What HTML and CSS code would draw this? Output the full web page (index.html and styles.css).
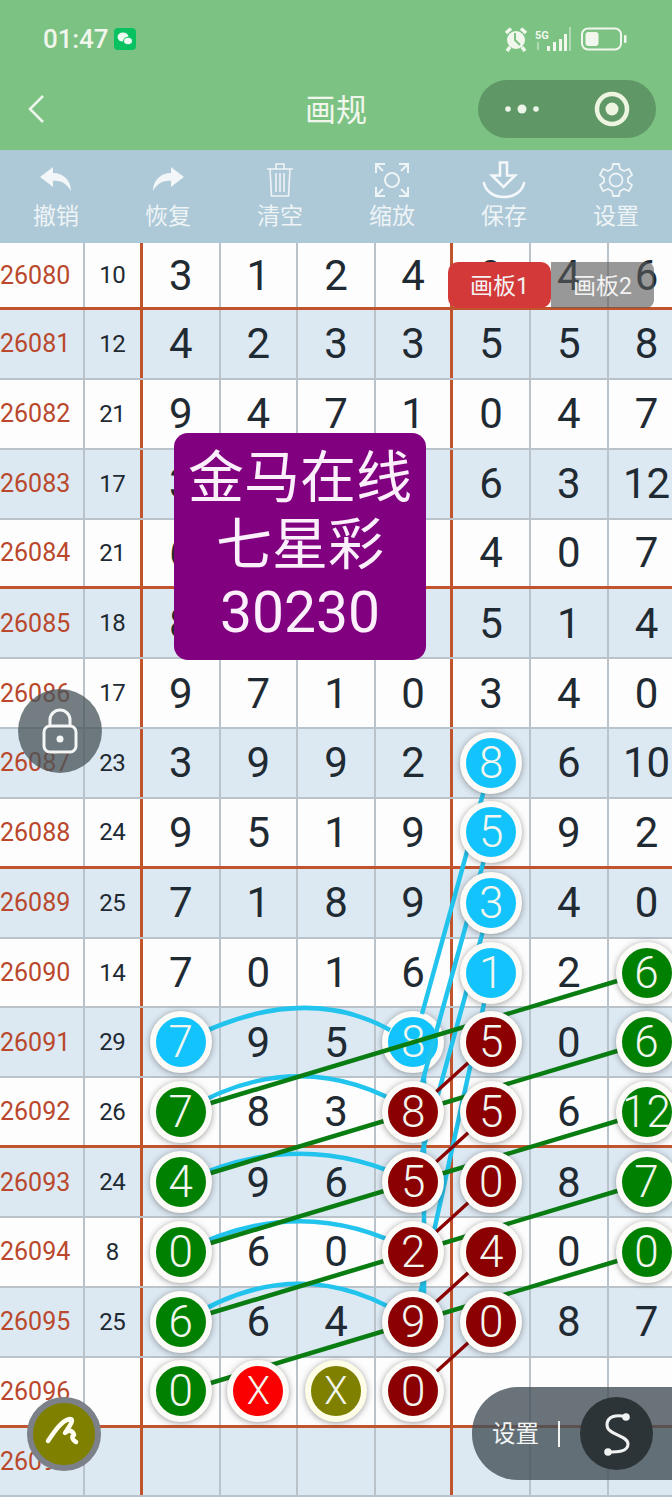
FILE: index.html
```html
<!DOCTYPE html>
<html lang="zh">
<head>
<meta charset="utf-8">
<title>画规</title>
<link rel="stylesheet" href="styles.css">
</head>
<body>
<div class="page">
  <header class="head">
    <div class="status">
      <div class="status-left">
        <span class="time">01:47</span>
        <svg class="wechat" width="22" height="22" viewBox="0 0 22 22"><rect width="22" height="22" rx="4" fill="#08c160"/><ellipse cx="9" cy="9" rx="5.500" ry="4.500" fill="#eefbf2"/><ellipse cx="14" cy="13" rx="4.500" ry="3.800" fill="#eefbf2" stroke="#08c160"/></svg>
      </div>
      <div class="status-right">
        <svg width="24" height="26" viewBox="0 0 24 26"><circle cx="12" cy="14" r="9" fill="#f2f7ee"/><path d="M11 7v7l5 5" fill="none" stroke="#7cc283" stroke-width="2"/><path d="M2 7l5-4.500M22 7l-5-4.500M6 21l-3 4M18 21l3 4" stroke="#f2f7ee" stroke-width="3.500"/></svg>
        <svg width="37" height="26" viewBox="0 0 37 26"><text x="1" y="13" class="fiveg">5G</text><path d="M3 16h2v8H3" fill="#f2f7ee" opacity=".45"/><path d="M13 20h3v5h-3zM19 16h3v9h-3zM25 13h3v12h-3zM30 8h3v17h-3z" fill="#f2f7ee"/><path d="M35 1h2v24h-2z" fill="#f2f7ee" opacity=".45"/></svg>
        <svg class="battery" width="46" height="24" viewBox="0 0 46 24"><rect x="1" y="1.500" width="39" height="21" rx="6" fill="none" stroke="#f2f7ee" stroke-width="2"/><rect x="4.500" y="5" width="13" height="14" rx="3" fill="#f2f7ee"/><rect x="43" y="8" width="2.500" height="8" rx="1" fill="#f2f7ee"/></svg>
      </div>
    </div>
    <nav class="nav">
      <svg class="back" width="18" height="28" viewBox="0 0 18 28"><path d="M16 1L3 14l13 13" fill="none" stroke="#f0f6ec" stroke-width="2.500"/></svg>
      <h1 class="title">画规</h1>
      <div class="capsule">
        <svg width="34" height="12" viewBox="0 0 34 12"><circle cx="3" cy="6" r="2.800" fill="#edf4e8"/><circle cx="17" cy="6" r="4.500" fill="#edf4e8"/><circle cx="31" cy="6" r="2.800" fill="#edf4e8"/></svg>
        <svg width="36" height="36" viewBox="0 0 36 36"><circle cx="18" cy="18" r="15" fill="none" stroke="#edf4e0" stroke-width="4.500"/><circle cx="18" cy="18" r="6.500" fill="#edf4e0"/></svg>
      </div>
    </nav>
  </header>

  <div class="tools">
    <div class="tool"><i class="tool-icon"><svg width="34" height="34" viewBox="0 0 34 34"><path d="M14 4L1 14l13 10v-6c8-1 14 3 18 10 0-11-8-18-18-18z" fill="#f2f6f8"/></svg></i><span>撤销</span></div>
    <div class="tool"><i class="tool-icon"><svg width="34" height="34" viewBox="0 0 34 34"><path d="M20 4l13 10-13 10v-6c-8-1-14 3-18 10 0-11 8-18 18-18z" fill="#f2f6f8"/></svg></i><span>恢复</span></div>
    <div class="tool"><i class="tool-icon"><svg width="34" height="36" viewBox="0 0 34 36"><g fill="none" stroke="#eef4f6" stroke-width="1.600"><path d="M4 7h26M13 7V2h8v5M7 7l1.500 27h17L27 7M13 11v19M17 11v19M21 11v19"/></g></svg></i><span>清空</span></div>
    <div class="tool"><i class="tool-icon"><svg width="36" height="36" viewBox="0 0 36 36"><g fill="none" stroke="#eef4f6" stroke-width="2"><circle cx="18" cy="18" r="7"/><path d="M2 11V2h9M25 2h9v9M2 25v9h9M25 34h9v-9"/><path d="M3 3l6 6M33 3l-6 6M3 33l6-6M33 33l-6-6"/></g></svg></i><span>缩放</span></div>
    <div class="tool"><i class="tool-icon"><svg width="44" height="38" viewBox="0 0 44 38"><g fill="none" stroke="#f4f8fa" stroke-width="2.600"><path d="M18 1.500h7v13h8L21.500 26 10 14.500h8z"/><path d="M2 22c2 9 10 14 20 14s18-5 20-14" stroke-linecap="round"/></g></svg></i><span>保存</span></div>
    <div class="tool"><i class="tool-icon"><svg width="34" height="36" viewBox="0 0 34 36"><g fill="none" stroke="#eef4f6" stroke-width="1.800"><path d="M14 2h6l1 5 4 2 5-2 3 6-4 3v4l4 3-3 6-5-2-4 2-1 5h-6l-1-5-4-2-5 2-3-6 4-3v-4l-4-3 3-6 5 2 4-2z"/><circle cx="17" cy="18" r="6.500"/></g></svg></i><span>设置</span></div>
  </div>

  <main class="board">
    <div class="row first sect"><div class="id">26080</div><div class="sum">10</div><div class="c">3</div><div class="c">1</div><div class="c">2</div><div class="c v">4</div><div class="c">9</div><div class="c">4</div><div class="c">6</div></div>
    <div class="row alt"><div class="id">26081</div><div class="sum">12</div><div class="c">4</div><div class="c">2</div><div class="c">3</div><div class="c v">3</div><div class="c">5</div><div class="c">5</div><div class="c">8</div></div>
    <div class="row"><div class="id">26082</div><div class="sum">21</div><div class="c">9</div><div class="c">4</div><div class="c">7</div><div class="c v">1</div><div class="c">0</div><div class="c">4</div><div class="c">7</div></div>
    <div class="row alt"><div class="id">26083</div><div class="sum">17</div><div class="c">3</div><div class="c"></div><div class="c"></div><div class="c v"></div><div class="c">6</div><div class="c">3</div><div class="c">12</div></div>
    <div class="row sect"><div class="id">26084</div><div class="sum">21</div><div class="c">6</div><div class="c"></div><div class="c"></div><div class="c v"></div><div class="c">4</div><div class="c">0</div><div class="c">7</div></div>
    <div class="row alt"><div class="id">26085</div><div class="sum">18</div><div class="c">8</div><div class="c"></div><div class="c"></div><div class="c v"></div><div class="c">5</div><div class="c">1</div><div class="c">4</div></div>
    <div class="row"><div class="id">26086</div><div class="sum">17</div><div class="c">9</div><div class="c">7</div><div class="c">1</div><div class="c v">0</div><div class="c">3</div><div class="c">4</div><div class="c">0</div></div>
    <div class="row alt"><div class="id">26087</div><div class="sum">23</div><div class="c">3</div><div class="c">9</div><div class="c">9</div><div class="c v">2</div><div class="c"><b class="ball cy">8</b></div><div class="c">6</div><div class="c">10</div></div>
    <div class="row sect"><div class="id">26088</div><div class="sum">24</div><div class="c">9</div><div class="c">5</div><div class="c">1</div><div class="c v">9</div><div class="c"><b class="ball cy">5</b></div><div class="c">9</div><div class="c">2</div></div>
    <div class="row alt"><div class="id">26089</div><div class="sum">25</div><div class="c">7</div><div class="c">1</div><div class="c">8</div><div class="c v">9</div><div class="c"><b class="ball cy">3</b></div><div class="c">4</div><div class="c">0</div></div>
    <div class="row"><div class="id">26090</div><div class="sum">14</div><div class="c">7</div><div class="c">0</div><div class="c">1</div><div class="c v">6</div><div class="c"><b class="ball cy">1</b></div><div class="c">2</div><div class="c"><b class="ball gr">6</b></div></div>
    <div class="row alt"><div class="id">26091</div><div class="sum">29</div><div class="c"><b class="ball cy">7</b></div><div class="c">9</div><div class="c">5</div><div class="c v"><b class="ball cy under">8</b></div><div class="c"><b class="ball rd">5</b></div><div class="c">0</div><div class="c"><b class="ball gr">6</b></div></div>
    <div class="row sect"><div class="id">26092</div><div class="sum">26</div><div class="c"><b class="ball gr">7</b></div><div class="c">8</div><div class="c">3</div><div class="c v"><b class="ball rd">8</b></div><div class="c"><b class="ball rd">5</b></div><div class="c">6</div><div class="c"><b class="ball gr">12</b></div></div>
    <div class="row alt"><div class="id">26093</div><div class="sum">24</div><div class="c"><b class="ball gr">4</b></div><div class="c">9</div><div class="c">6</div><div class="c v"><b class="ball rd">5</b></div><div class="c"><b class="ball rd">0</b></div><div class="c">8</div><div class="c"><b class="ball gr">7</b></div></div>
    <div class="row"><div class="id">26094</div><div class="sum">8</div><div class="c"><b class="ball gr">0</b></div><div class="c">6</div><div class="c">0</div><div class="c v"><b class="ball rd">2</b></div><div class="c"><b class="ball rd">4</b></div><div class="c">0</div><div class="c"><b class="ball gr">0</b></div></div>
    <div class="row alt"><div class="id">26095</div><div class="sum">25</div><div class="c"><b class="ball gr">6</b></div><div class="c">6</div><div class="c">4</div><div class="c v"><b class="ball rd">9</b></div><div class="c"><b class="ball rd">0</b></div><div class="c">8</div><div class="c">7</div></div>
    <div class="row sect"><div class="id">26096</div><div class="sum"></div><div class="c"><b class="ball gr">0</b></div><div class="c"><b class="ball red x">X</b></div><div class="c"><b class="ball ol x">X</b></div><div class="c v"><b class="ball rd">0</b></div><div class="c"></div><div class="c"></div><div class="c"></div></div>
    <div class="row alt"><div class="id">26097</div><div class="sum"></div><div class="c"></div><div class="c"></div><div class="c"></div><div class="c v"></div><div class="c"></div><div class="c"></div><div class="c"></div></div>

    <svg class="links" width="672" height="1257" viewBox="0 243 672 1257">
      <g fill="none" stroke="#22c4ee" stroke-width="4.500">
        <path d="M181 1043Q300 980 390 1030"/>
        <path d="M181 1113Q300 1040 414 1112"/>
        <path d="M181 1183Q300 1125 414 1182"/>
        <path d="M181 1253Q300 1190 414 1252"/>
        <path d="M181 1323Q300 1245 414 1322"/>
        <path d="M491 765L422 1014"/>
        <path d="M491 835L414 1112"/>
        <path d="M491 902L414 1182"/>
        <path d="M491 972L414 1322"/>
        <path d="M424 1075L424 1320"/>
      </g>
      <g stroke="#8b0000" stroke-width="3.500">
        <path d="M491 1042L414 1112"/>
        <path d="M491 1112L414 1182"/>
        <path d="M491 1182L414 1252"/>
        <path d="M491 1252L414 1322"/>
        <path d="M491 1322L414 1392"/>
      </g>
      <g stroke="#0a7d12" stroke-width="4.500">
        <path d="M647 972L181 1112"/>
        <path d="M647 1042L181 1182"/>
        <path d="M647 1112L181 1252"/>
        <path d="M647 1182L181 1322"/>
        <path d="M647 1252L181 1392"/>
      </g>
    </svg>

    <div class="tabs">
      <span class="tab on">画板1</span>
      <span class="tab">画板2</span>
    </div>

    <div class="promo">金马在线<br>七星彩<br><span class="promo-num">30230</span></div>

    <button class="lock" type="button" aria-label="锁定">
      <svg width="36" height="46" viewBox="0 0 36 46"><g fill="none" stroke="#f4f6f6" stroke-width="3"><rect x="2" y="18" width="32" height="26" rx="6"/><path d="M8 18v-6a10 10 0 0 1 20 0v6"/></g><circle cx="18" cy="31" r="3.500" fill="#f4f6f6"/></svg>
    </button>

    <button class="pen" type="button" aria-label="画笔">
      <svg width="44" height="44" viewBox="0 0 44 44"><path d="M6 29C12 20 20 8 28 7C33 7 27 15 23 21C27 17 31 19 32 23C30 23 29 27 34 30" fill="none" stroke="#fdfdf2" stroke-width="4.500" stroke-linecap="round" stroke-linejoin="round"/></svg>
    </button>

    <div class="dock">
      <span class="dock-label">设置</span>
      <i class="dock-sep"></i>
      <span class="dock-btn">
        <svg width="40" height="54" viewBox="0 0 40 54"><path d="M29 10C20 7 10 9 10 18C10 28 31 28 31 37C31 45 20 45 11 45" fill="none" stroke="#f0f2f2" stroke-width="3"/><circle cx="29" cy="10" r="3.800" fill="#f0f2f2"/><circle cx="11" cy="45" r="3.800" fill="#f0f2f2"/></svg>
      </span>
    </div>
  </main>
</div>
</body>
</html>
```
FILE: styles.css
```css
* { box-sizing: border-box; }
html, body { margin: 0; padding: 0; }
body { font-family: Roboto, "Noto Sans CJK SC", sans-serif; background: #fff; }
.page { width: 672px; height: 1500px; overflow: hidden; display: flex; flex-direction: column; }

.head { height: 150px; background: #7cc283; color: #f0f6ec; flex: none; }
.status { height: 80px; padding: 24px 45px 0 43px; display: flex; justify-content: space-between; align-items: flex-start; }
.status-left { display: flex; align-items: center; gap: 6px; height: 30px; }
.time { font-size: 26px; line-height: 30px; font-weight: 500; letter-spacing: -.1px; }
.status-right { display: flex; align-items: center; gap: 6px; height: 30px; }
.battery { margin-left: 4px; }
.fiveg { font: 700 11px Roboto, sans-serif; fill: #f2f7ee; }
.nav { height: 58px; padding: 0 16px; display: grid; grid-template-columns: 178px 1fr 178px; align-items: center; }
.back { justify-self: start; margin-left: 11px; }
.title { margin: 0; padding-top: 3px; font-size: 31px; font-weight: 400; line-height: 40px; text-align: center; }
.capsule { justify-self: end; width: 178px; height: 58px; border-radius: 29px; background: #5f9866; display: flex; align-items: center; justify-content: space-between; padding: 0 26px 0 27px; }

.tools { height: 93px; flex: none; background: #adc8d6; display: flex; }
.tool { flex: 1; display: flex; flex-direction: column; align-items: center; padding-top: 11px; gap: 3px; color: #eef4f6; font-size: 23px; line-height: 30px; }
.tool-icon { height: 38px; display: flex; align-items: center; justify-content: center; }

.board { position: relative; flex: 1; }
.row { display: grid; grid-template-columns: 84.5px 58.5px repeat(4, 77.6px) 77.5px 77.75px 77.75px; height: 69.85px; background: #fdfdfd; border-bottom: 2px solid #b9c3c9; }
.row.first { height: 67px; }
.row.alt { background: #dce8f2; }
.row.sect { border-bottom: 3px solid #c2542d; }
.id, .sum, .c { display: flex; align-items: center; justify-content: center; }
.id { font-size: 25px; color: #b9482c; justify-content: flex-start; border-right: 2px solid #b9c3c9; }
.sum { font-size: 24px; color: #1f2a33; border-right: 3px solid #c2542d; letter-spacing: -.5px; }
.c { font-size: 42px; color: #1f2a33; border-right: 2px solid #b9c3c9; white-space: nowrap; }
.c.v { border-right: 3px solid #c2542d; }

.ball { position: relative; z-index: 2; flex: none; width: 62px; height: 62px; border-radius: 50%; border: 6px solid #fdfbf8; display: flex; align-items: center; justify-content: center; font-size: 44px; font-weight: 300; color: #f2f6ee; box-shadow: 0 1px 6px rgba(40, 40, 40, .45); overflow: hidden; }
.ball.under { z-index: 0; }
.ball.x { font-size: 38px; }
.cy { background: #12c4fb; }
.gr { background: #008000; }
.rd { background: #8b0000; }
.red { background: #fb0000; }
.ol { background: #808000; border-color: #fdfde8; }

.links { position: absolute; left: 0; top: 0; z-index: 1; pointer-events: none; }

.tabs { position: absolute; z-index: 4; left: 448px; top: 19px; display: flex; }
.tab { width: 103px; height: 46px; padding-bottom: 3px; display: flex; align-items: center; justify-content: center; color: #f2f2f2; font-size: 23px; background: rgba(90, 90, 90, .62); border-radius: 0 8px 8px 0; }
.tab.on { background: #d4393a; border-radius: 10px; }

.promo { position: absolute; z-index: 4; left: 174px; top: 190px; width: 252px; height: 227px; border-radius: 14px; background: #800080; color: #fbeffb; font-size: 56px; line-height: 67px; text-align: center; padding-top: 12px; }
.promo-num { font-size: 57px; }

.lock, .pen { position: absolute; z-index: 5; padding: 0; border-radius: 50%; display: flex; align-items: center; justify-content: center; }
.lock { left: 18px; top: 446px; width: 84px; height: 84px; background: rgba(72, 84, 90, .76); border: 0; }
.pen { left: 27px; top: 1154px; width: 74px; height: 74px; background: #808000; border: 6px solid #7c8088; }

.dock { position: absolute; z-index: 5; left: 472px; top: 1144px; width: 200px; height: 93px; border-radius: 46px 0 0 46px; background: rgba(68, 80, 88, .8); display: flex; align-items: center; padding-left: 20px; color: #f2f4f4; }
.dock-label { font-size: 23.500px; line-height: 30px; }
.dock-sep { width: 2px; height: 26px; margin-left: 19px; background: #f2f4f4; }
.dock-btn { margin-left: 20px; width: 73px; height: 73px; border-radius: 50%; background: #2c3438; display: flex; align-items: center; justify-content: center; }
```
